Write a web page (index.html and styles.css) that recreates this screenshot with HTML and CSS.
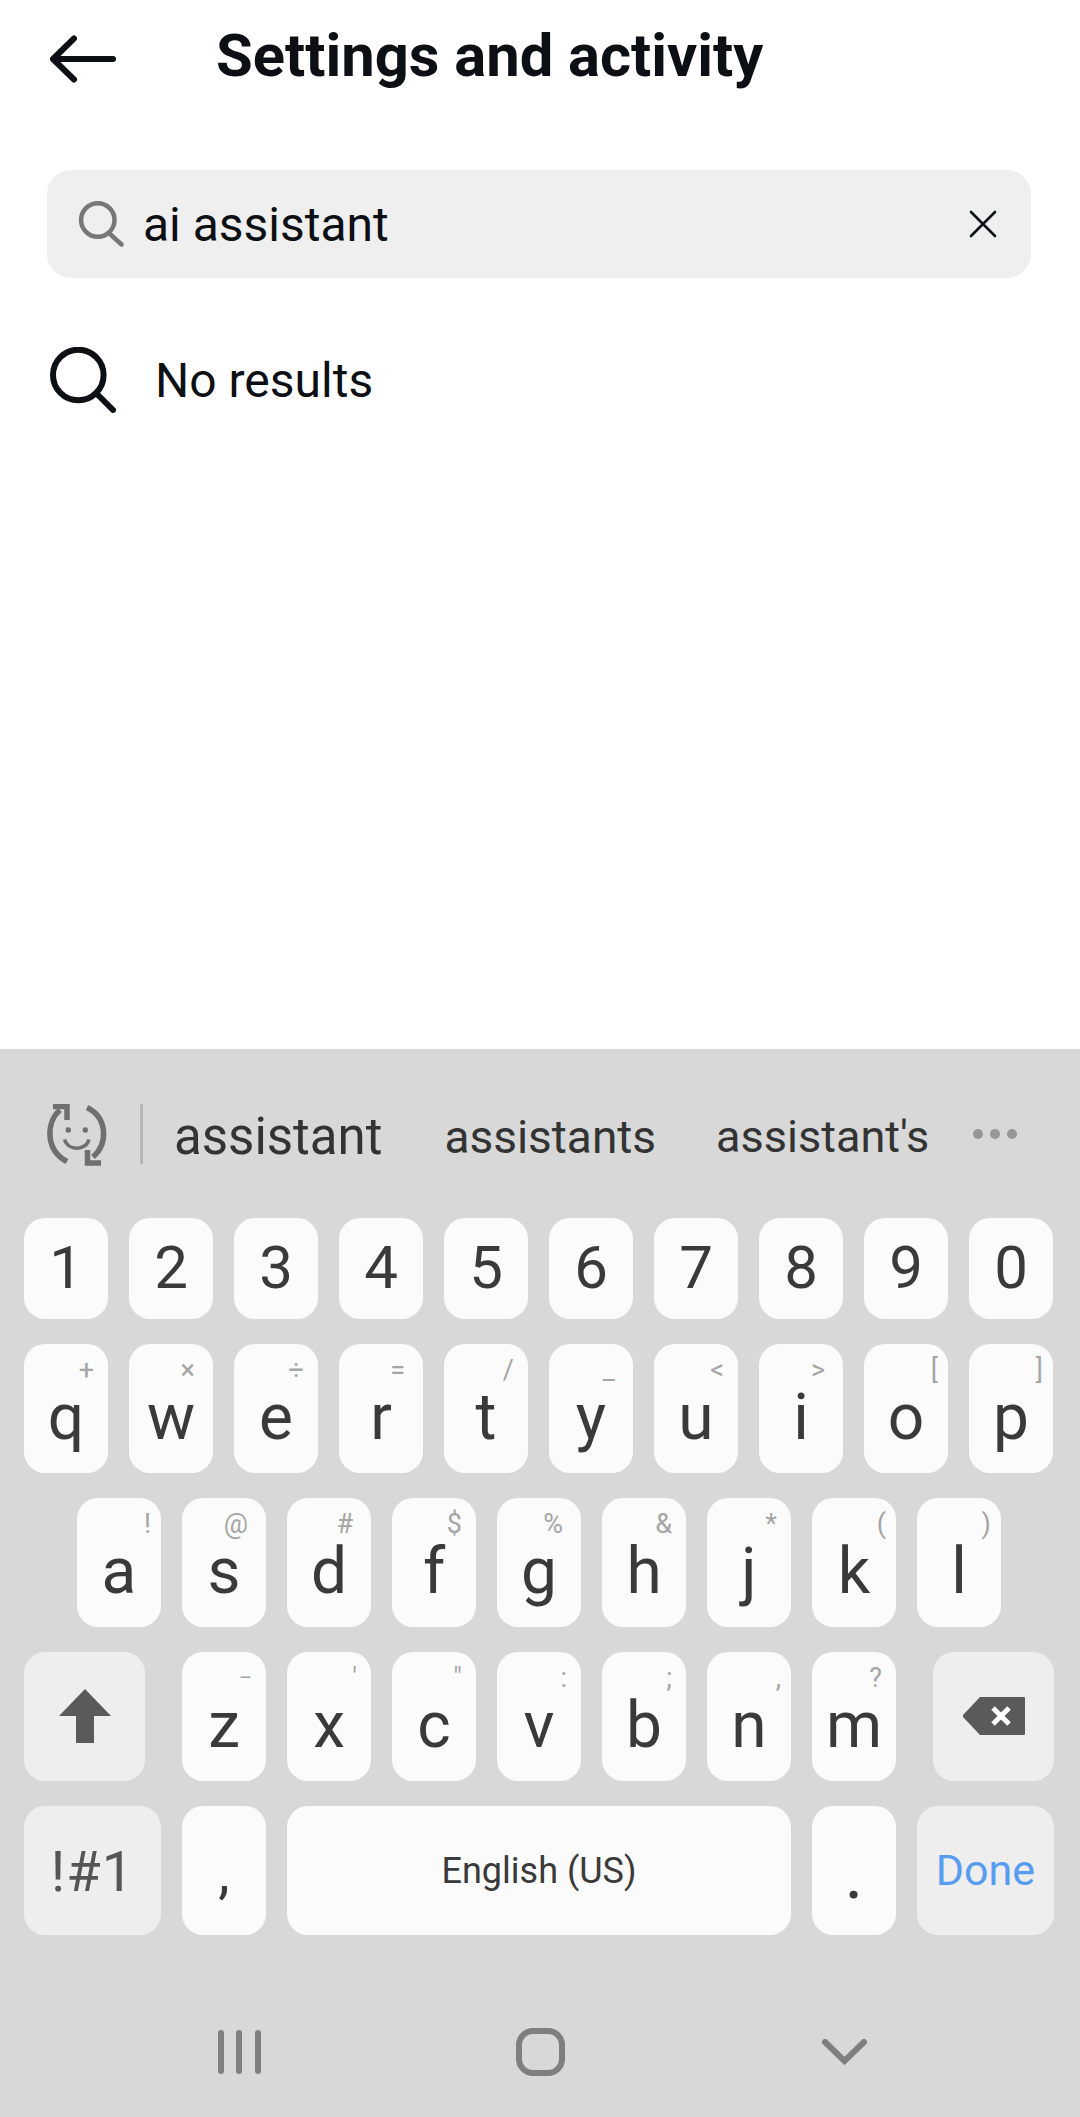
FILE: index.html
```html
<!DOCTYPE html>
<html lang="en">

<head>
    <meta charset="UTF-8" />
    <meta name="viewport" content="width=device-width, initial-scale=1.0" />
    <title>Settings and activity</title>
    <link rel="stylesheet" href="styles.css">
</head>

<body class="page">
    <main class="screen">
        <header class="top-bar">
            <svg class="back-icon" viewBox="0 0 66 48" fill="none" stroke="#0c1014" stroke-width="6" stroke-linecap="round" stroke-linejoin="round">
                <path d="M24 3.500 L3 24 L24 44.500 M3 24 H63" />
            </svg>
            <h1 class="top-title">Settings and activity</h1>
        </header>
        <div class="search-box">
            <svg class="search-icon" viewBox="0 0 46 46" fill="none" stroke="#777" stroke-width="4.500" stroke-linecap="round">
                <circle cx="18.800" cy="19" r="16.700" />
                <path d="M31 33 L42.500 43.500" />
            </svg>
            <span class="search-text">ai assistant</span>
            <svg class="clear-icon" viewBox="0 0 28 28" fill="none" stroke="#0c1014" stroke-width="2.600" stroke-linecap="round">
                <path d="M2 2 L26 26 M26 2 L2 26" />
            </svg>
        </div>
        <div class="no-results">
            <svg class="result-icon" viewBox="0 0 66 66" fill="none" stroke="#0c1014" stroke-width="6" stroke-linecap="round">
                <circle cx="28.300" cy="28" r="25.300" />
                <path d="M48 48 L63 63" />
            </svg>
            <span class="no-results-text">No results</span>
        </div>
    </main>

    <section class="keyboard">
        <div class="suggest-bar">
            <svg class="emoji-icon" viewBox="0 0 62 62" fill="none" stroke="#6f6f6f" stroke-width="5.500">
                <path d="M14 6 C0 18 -1 46 21 57.500" />
                <path d="M41 3.500 C62 14 62 40 47 53" />
                <path d="M7 2.500 H21 V16" />
                <path d="M55 59 H41.500 V46" />
                <path d="M18.500 35.500 C22 47 40 47 43 35.500" stroke-width="3.500" />
                <circle cx="22.300" cy="26" r="2.700" fill="#6f6f6f" stroke="none" />
                <circle cx="39.300" cy="26" r="2.700" fill="#6f6f6f" stroke="none" />
            </svg>
            <span class="suggest-line"></span>
            <span class="suggest-word suggest-main">assistant</span>
            <span class="suggest-word suggest-second">assistants</span>
            <span class="suggest-word suggest-third">assistant's</span>
            <span class="suggest-dots"><i></i><i></i><i></i></span>
        </div>

        <div class="key-row">
            <div class="key num-key">1</div>
            <div class="key num-key">2</div>
            <div class="key num-key">3</div>
            <div class="key num-key">4</div>
            <div class="key num-key">5</div>
            <div class="key num-key">6</div>
            <div class="key num-key">7</div>
            <div class="key num-key">8</div>
            <div class="key num-key">9</div>
            <div class="key num-key">0</div>
        </div>

        <div class="key-row">
            <div class="key">q<span class="hint">+</span></div>
            <div class="key">w<span class="hint hint-in">×</span></div>
            <div class="key">e<span class="hint">÷</span></div>
            <div class="key">r<span class="hint hint-in">=</span></div>
            <div class="key">t<span class="hint">/</span></div>
            <div class="key">y<span class="hint hint-in">_</span></div>
            <div class="key">u<span class="hint">&lt;</span></div>
            <div class="key">i<span class="hint hint-in">&gt;</span></div>
            <div class="key">o<span class="hint hint-out">[</span></div>
            <div class="key">p<span class="hint hint-out">]</span></div>
        </div>

        <div class="key-row row-inset">
            <div class="key">a<span class="hint hint-out">!</span></div>
            <div class="key">s<span class="hint hint-in">@</span></div>
            <div class="key">d<span class="hint hint-in">#</span></div>
            <div class="key">f<span class="hint">$</span></div>
            <div class="key">g<span class="hint hint-in">%</span></div>
            <div class="key">h<span class="hint">&amp;</span></div>
            <div class="key">j<span class="hint">*</span></div>
            <div class="key">k<span class="hint hint-out">(</span></div>
            <div class="key">l<span class="hint hint-out">)</span></div>
        </div>

        <div class="key-row shift-row">
            <div class="key fn-key wide-key">
                <svg class="shift-icon" viewBox="0 0 52 54" fill="#5a5a5a">
                    <path d="M26 0 L52 27 H35 V54 H17 V27 H0 Z" />
                </svg>
            </div>
            <div class="letters">
                <div class="key">z<span class="hint hint-dash">–</span></div>
                <div class="key">x<span class="hint">'</span></div>
                <div class="key">c<span class="hint">"</span></div>
                <div class="key">v<span class="hint">:</span></div>
                <div class="key">b<span class="hint">;</span></div>
                <div class="key">n<span class="hint hint-out">,</span></div>
                <div class="key">m<span class="hint">?</span></div>
            </div>
            <div class="key fn-key wide-key">
                <svg class="del-icon" viewBox="0 0 62 38" fill="none">
                    <path d="M17 0 H61 Q62 0 62 1 V37 Q62 38 61 38 H17 L0 20 Q-1 19 0 18 Z" fill="#5a5a5a" />
                    <path d="M30 11 L46 27 M46 11 L30 27" stroke="#fff" stroke-width="5" />
                </svg>
            </div>
        </div>

        <div class="key-row">
            <div class="key fn-key sym-key">!#1</div>
            <div class="key comma-key">,</div>
            <div class="key space-key">English (US)</div>
            <div class="key dot-key">.</div>
            <div class="key fn-key done-key">Done</div>
        </div>

        <nav class="nav-bar">
            <svg class="nav-recent" viewBox="0 0 43 44" fill="#7f7f7f">
                <rect x="0" width="6" height="44" rx="3" />
                <rect x="18" width="6" height="44" rx="3" />
                <rect x="37" width="6" height="44" rx="3" />
            </svg>
            <svg class="nav-home" viewBox="0 0 49 48" fill="none" stroke="#7f7f7f" stroke-width="6">
                <rect x="3" y="3" width="43" height="42" rx="14" />
            </svg>
            <svg class="nav-back" viewBox="0 0 45 26" fill="none" stroke="#7f7f7f" stroke-width="6" stroke-linecap="round">
                <path d="M3 3 L22.500 22 L42 3" />
            </svg>
        </nav>
    </section>
</body>

</html>
```

FILE: styles.css
```css
* {
    box-sizing: border-box;
}

html,
body {
    margin: 0;
    padding: 0;
}

.page {
    width: 1080px;
    height: 2117px;
    display: flex;
    flex-direction: column;
    overflow: hidden;
    background-color: #fff;
    font-family: Roboto, "Liberation Sans", sans-serif;
}

.screen {
    flex: 1;
    min-height: 0;
    padding: 0 49px 0 47px;
    color: #0c1014;
}

.top-bar {
    height: 170px;
    padding: 35px 0 0 3px;
    display: flex;
    align-items: flex-start;
}

.back-icon {
    width: 66px;
    height: 48px;
    flex: none;
}

.top-title {
    margin: -13px 0 0 100px;
    font-size: 59.7px;
    line-height: 68px;
    font-weight: 700;
}

.search-box {
    height: 108px;
    padding: 0 34px 0 32px;
    display: flex;
    align-items: center;
    border-radius: 24px;
    background-color: #efefef;
}

.search-icon {
    width: 46px;
    height: 46px;
    flex: none;
}

.search-text {
    flex: 1;
    margin-left: 18px;
    font-size: 48px;
}

.clear-icon {
    width: 28px;
    height: 28px;
    flex: none;
}

.no-results {
    margin-top: 69px;
    padding-left: 3px;
    display: flex;
    align-items: center;
}

.result-icon {
    width: 66px;
    height: 66px;
    flex: none;
}

.no-results-text {
    margin-left: 39px;
    font-size: 48px;
}

.keyboard {
    height: 1068px;
    flex: none;
    background-color: #d8d8d8;
    color: #3a3a3a;
}

.suggest-bar {
    height: 169px;
    padding: 55px 0 0 46px;
    display: flex;
    align-items: flex-start;
    color: #333;
}

.emoji-icon {
    width: 62px;
    height: 62px;
    flex: none;
}

.suggest-line {
    width: 3px;
    height: 60px;
    margin-left: 32px;
    background-color: #b5b5b5;
}

.suggest-word {
    margin-top: 3px;
    font-size: 46px;
    line-height: 60px;
    white-space: nowrap;
}

.suggest-main {
    margin-left: 31px;
    font-size: 51px;
}

.suggest-second {
    margin-left: 62px;
}

.suggest-third {
    margin-left: 60px;
    font-size: 45px;
}

.suggest-dots {
    margin: 25px 0 0 44px;
    display: flex;
    gap: 7px;
}

.suggest-dots i {
    width: 10px;
    height: 10px;
    border-radius: 50%;
    background-color: #979797;
}

.key-row {
    padding-left: 24px;
    margin-bottom: 25px;
    display: flex;
    gap: 21px;
}

.row-inset {
    padding-left: 77px;
}

.shift-row {
    gap: 37px;
}

.letters {
    display: flex;
    gap: 21px;
}

.key {
    position: relative;
    width: 84px;
    height: 129px;
    flex: none;
    padding-top: 42px;
    border-radius: 21px;
    background-color: #fbfbfb;
    font-size: 64px;
    line-height: 64px;
    text-align: center;
}

.num-key {
    height: 101px;
    padding-top: 20px;
    font-size: 60px;
    line-height: 60px;
}

.hint {
    position: absolute;
    top: 10px;
    right: 14px;
    color: #a5a5a5;
    font-size: 27px;
    line-height: 32px;
}

.hint-in {
    right: 18px;
}

.hint-out {
    right: 10px;
}

.hint-dash {
    top: 10px;
    font-size: 20px;
}

.fn-key {
    background-color: #eee;
}

.wide-key {
    width: 121px;
    padding-top: 37px;
}

.shift-icon {
    width: 52px;
    height: 54px;
    display: block;
    margin: 0 auto;
}

.del-icon {
    width: 62px;
    height: 38px;
    display: block;
    margin: 8px 0 0 30px;
}

.sym-key {
    width: 137px;
    padding-top: 34px;
    color: #555;
    font-size: 56px;
    letter-spacing: 1px;
}

.comma-key {
    padding-top: 37px;
    font-size: 58px;
    line-height: 58px;
}

.dot-key {
    padding-top: 32px;
    font-size: 72px;
    line-height: 72px;
}

.space-key {
    width: 504px;
    padding-top: 47px;
    font-size: 36px;
    line-height: 36px;
}

.done-key {
    width: 137px;
    padding-top: 42px;
    color: #569cf0;
    font-size: 43px;
    line-height: 44px;
}

.nav-bar {
    height: 157px;
    padding: 27px 0 0 218px;
    display: flex;
    align-items: center;
}

.nav-recent {
    width: 43px;
    height: 44px;
}

.nav-home {
    width: 49px;
    height: 48px;
    margin-left: 255px;
}

.nav-back {
    width: 45px;
    height: 26px;
    margin-left: 257px;
}
```
